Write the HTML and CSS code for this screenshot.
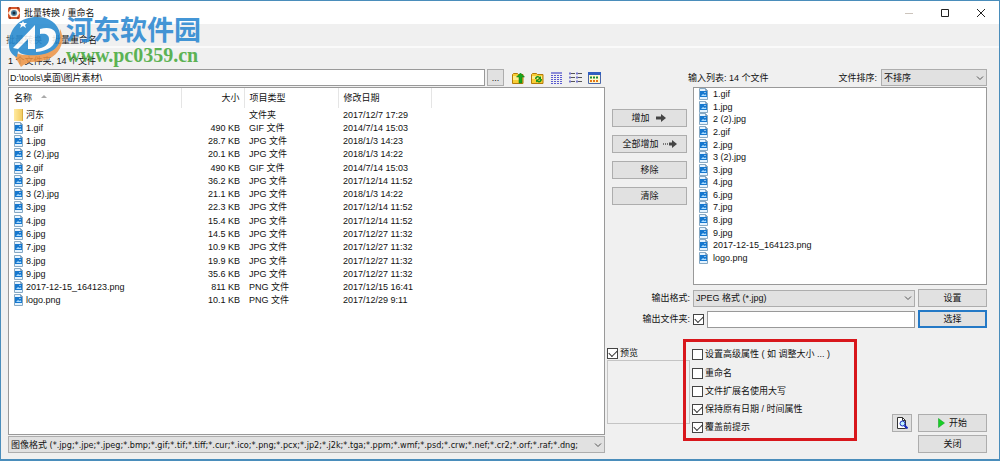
FILE: index.html
```
<!DOCTYPE html>
<html lang="zh-CN">
<head>
<meta charset="utf-8">
<title>批量转换 / 重命名</title>
<link rel="stylesheet" href="styles.css">
<script src="app.js" defer></script>
</head>
<body>
<svg class="sprite" aria-hidden="true">
  <symbol id="picture" viewBox="0 0 9 12">
    <path d="M.5.5h6l2 2v9h-8z" fill="#e4f3ff" stroke="#86a9c4"/>
    <path d="M6.5.5v2h2" fill="none" stroke="#86a3bc"/>
    <path d="M1 3h7v6H1z" fill="#1678cf"/>
    <path d="M2 8l2-2 1.500 1 1-.8 1 1.800z" fill="#a9dcff"/>
    <path d="M5.500 4h1v1h-1z" fill="#fff"/>
  </symbol>
  <symbol id="chevron" viewBox="0 0 8 6"><path d="M1 1.500l3 3 3-3" fill="none" stroke="#555"/></symbol>
</svg>
<div class="window">
  <header class="titlebar">
    <svg class="app-icon" viewBox="0 0 12 12">
      <rect width="12" height="12" rx="2" fill="#d8572a"/>
      <path d="M0 6l3-4h6l3 4-3 4H3z" fill="#fff0df"/>
      <circle cx="6" cy="6" r="3" fill="#4a7f9f"/><circle cx="6" cy="6" r="1.500" fill="#172936"/>
      <path d="M1 1h2M9 1h2M1 11h2M9 11h2" stroke="#6d2210"/>
    </svg>
    <h1 class="title">批量转换 / 重命名</h1>
    <div class="window-buttons">
      <button class="window-button" aria-label="最小化"><svg viewBox="0 0 10 10"><path d="M1 5.500h8" stroke="#ccc4bc"/></svg></button>
      <button class="window-button" aria-label="最大化"><svg viewBox="0 0 10 10"><path d="M1.500 1.500h7v7h-7z" fill="none" stroke="#222"/></svg></button>
      <button class="window-button" aria-label="关闭窗口"><svg viewBox="0 0 10 10"><path d="M1 1l8 8M9 1L1 9" stroke="#222"/></svg></button>
    </div>
  </header>
  <nav class="tabs">
    <button class="tab tab-active">批量转换</button>
    <button class="tab">批量重命名</button>
  </nav>
  <main class="page">
    <section class="browser">
      <p class="count">1 个文件夹, 14 个文件</p>
      <div class="path-row">
        <input class="field path" type="text" aria-label="路径" value="D:\tools\桌面\图片素材\">
        <button class="button browse">...</button>
        <div class="tools">
          <button class="tool" aria-label="上一级"><svg viewBox="0 0 13 12"><path d="M.5 2.500l1-1h4l1 1h4.500v9H.5z" fill="#f8ce36" stroke="#b47a08"/><path d="M1 4h8v4H1z" fill="#ffec8a"/><path d="M8.500 1l4 4h-2.500v6H7V5H4.500z" fill="#18a51c" stroke="#087a10" stroke-width=".5"/></svg></button>
          <button class="tool" aria-label="刷新"><svg viewBox="0 0 13 12"><path d="M.5 2.500l1-1h4l1 1h5.500v9H.5z" fill="#f8ce36" stroke="#b47a08"/><path d="M1 4h10v3H1z" fill="#ffec8a"/><path d="M4 7c0-3 3-4 5-2l1-1v3.500H6.500L8 6C6.500 5 5.500 6 5.500 7zM11 7c0 3-3 4.500-5 2.500l-1 1V7.500h3l-1 1c1.500 1 2.500 0 2.500-1.500z" fill="#16921a"/></svg></button>
          <button class="tool" aria-label="列表"><svg viewBox="0 0 13 12"><path d="M1 1h11" stroke="#8d8dd8" stroke-width="2"/><path d="M1 3.500h2m1 0h2m1 0h2m1 0h2M1 5.500h2m1 0h2m1 0h2m1 0h2M1 7.500h2m1 0h2m1 0h2m1 0h2M1 9.500h2m1 0h2m1 0h2m1 0h2M1 11.500h2m1 0h2m1 0h2m1 0h2" stroke="#5b5bd0"/></svg></button>
          <button class="tool" aria-label="小图标"><svg viewBox="0 0 13 12"><path d="M0 1.500h2m5 0h2M0 5.500h2m5 0h2M0 9.500h2m5 0h2" stroke="#7777cf" stroke-width="2"/><path d="M2 1.500h4m3 0h4M2 5.500h4m3 0h4M2 9.500h4m3 0h4" stroke="#555"/></svg></button>
          <button class="tool" aria-label="缩略图"><svg viewBox="0 0 13 12"><path d="M.5.5h12v11H.5z" fill="#fff8cf" stroke="#4966aa"/><path d="M0 1.500h13" stroke="#315fc0" stroke-width="3"/><path d="M2 5.500h2m1 0h2m1 0h2" stroke="#198d35" stroke-width="2"/><path d="M2 9h2m1 0h2m1 0h2" stroke="#e47816" stroke-width="2"/></svg></button>
        </div>
      </div>
      <div class="file-list">
        <table class="files">
          <colgroup><col class="col-name"><col class="col-size"><col class="col-type"><col class="col-date"></colgroup>
          <thead><tr><th>名称 <svg class="sort" viewBox="0 0 6 4"><path d="M0 4l3-3 3 3z" fill="#aaa"/></svg></th><th class="size">大小</th><th>项目类型</th><th>修改日期</th></tr></thead>
          <tbody id="files"></tbody>
        </table>
      </div>
      <div class="select-box filter">
        <select class="select" aria-label="图像格式"><option>图像格式 (*.jpg;*.jpe;*.jpeg;*.bmp;*.gif;*.tif;*.tiff;*.cur;*.ico;*.png;*.pcx;*.jp2;*.j2k;*.tga;*.ppm;*.wmf;*.psd;*.crw;*.nef;*.cr2;*.orf;*.raf;*.dng;</option></select>
        <svg class="chevron"><use href="#chevron"/></svg>
      </div>
    </section>

    <section class="convert">
      <div class="input-area">
        <div class="transfer">
          <button class="button">增加 <svg class="arrow" viewBox="0 0 12 8"><path d="M1 4h7" stroke="#444" stroke-width="3"/><path d="M6 0l5 4-5 4z" fill="#444"/></svg></button>
          <button class="button">全部增加 <svg class="arrow" viewBox="0 0 14 8"><path d="M0 4h1m1 0h1m1 0h1" stroke="#777" stroke-width="2"/><path d="M6 4h4" stroke="#444" stroke-width="3"/><path d="M9 0l5 4-5 4z" fill="#444"/></svg></button>
          <button class="button">移除</button>
          <button class="button">清除</button>
        </div>
        <div class="queue">
          <div class="queue-head">
            <span>输入列表: 14 个文件</span>
            <label for="sort">文件排序:</label>
            <div class="select-box sort-box"><select class="select" id="sort"><option>不排序</option></select><svg class="chevron"><use href="#chevron"/></svg></div>
          </div>
          <ul class="queue-list" id="queue"></ul>
        </div>
      </div>
      <div class="output">
        <label for="format">输出格式:</label>
        <div class="select-box format"><select class="select" id="format"><option>JPEG 格式 (*.jpg)</option></select><svg class="chevron"><use href="#chevron"/></svg></div>
        <button class="button">设置</button>
        <label for="use-folder">输出文件夹:</label>
        <input class="check" type="checkbox" id="use-folder" checked>
        <input class="field" type="text" aria-label="输出文件夹路径">
        <button class="button button-focus">选择</button>
      </div>
      <div class="bottom">
        <div class="preview">
          <label class="option"><input class="check" type="checkbox" checked>预览</label>
          <div class="preview-pane"></div>
        </div>
        <div class="options">
          <label class="option option-first"><input class="check" type="checkbox">设置高级属性 ( 如 调整大小 ... )</label>
          <label class="option"><input class="check" type="checkbox">重命名</label>
          <label class="option"><input class="check" type="checkbox">文件扩展名使用大写</label>
          <label class="option"><input class="check" type="checkbox" checked>保持原有日期 / 时间属性</label>
          <label class="option"><input class="check" type="checkbox" checked>覆盖前提示</label>
        </div>
        <div class="actions">
          <button class="button" aria-label="预览结果"><svg class="look" viewBox="0 0 12 12"><path d="M1.500.5h5l3 3v8h-8z" fill="#fff" stroke="#333"/><path d="M6.500.5v3h3" fill="none" stroke="#333"/><circle cx="6.500" cy="6.500" r="2.500" fill="#bdf1ff" stroke="#1729bd"/><path d="M8.500 8.500l3 3" stroke="#1729bd" stroke-width="2"/></svg></button>
          <button class="button"><svg class="play" viewBox="0 0 7 10"><path d="M.5.500l6 4.500-6 4.500z" fill="#17cf24" stroke="#0b9a1c" stroke-width=".5"/></svg> 开始</button>
          <button class="button close">关闭</button>
        </div>
      </div>
    </section>
  </main>
  <div class="watermark">
    <svg class="mark" viewBox="0 0 56 52">
      <path d="M52 14c6 12 0 27-15 31-9 3-17 0-24 7L3 35c8 6 17 6 27 3 14-4 22-12 22-24z" fill="#ee9444"/>
      <path d="M1 30C1 12 13 2 29 2c12 0 21 6 23 17 2 12-8 20-22 21-9 1-17 0-20-4 0 2-1 4-1 6-5-2-8-6-8-12z" fill="#2187cf"/>
      <path d="M5 33L27 10v24h-7V24L10 34z" fill="#fff"/>
      <path d="M32 14c12-3 17 2 16 9-1 8-8 13-20 14v-3c9-1 13-5 13-10 0-4-3-6-9-5z" fill="#fff"/>
      <path d="M15 6l1 2h3l-2 2 1 3-3-2-3 2 1-3-2-2h3z" fill="#fff"/>
    </svg>
    <div>
      <div class="brand">河东软件园</div>
      <div class="site">www.pc0359.cn</div>
    </div>
  </div>
</div>
</body>
</html>
```
FILE: app.js
```
const files = [
  ["1.gif", "490 KB", "2014/7/14 15:03"],
  ["1.jpg", "28.7 KB", "2018/1/3 14:23"],
  ["2 (2).jpg", "20.1 KB", "2018/1/3 14:22"],
  ["2.gif", "490 KB", "2014/7/14 15:03"],
  ["2.jpg", "36.2 KB", "2017/12/14 11:52"],
  ["3 (2).jpg", "21.1 KB", "2018/1/3 14:22"],
  ["3.jpg", "22.3 KB", "2017/12/14 11:52"],
  ["4.jpg", "15.4 KB", "2017/12/14 11:52"],
  ["6.jpg", "14.5 KB", "2017/12/27 11:32"],
  ["7.jpg", "10.9 KB", "2017/12/27 11:32"],
  ["8.jpg", "19.9 KB", "2017/12/27 11:32"],
  ["9.jpg", "35.6 KB", "2017/12/27 11:32"],
  ["2017-12-15_164123.png", "811 KB", "2017/12/15 16:41"],
  ["logo.png", "10.1 KB", "2017/12/29 9:11"]
];
const picture = '<svg class="picture"><use href="#picture"/></svg>';
const row = (icon, name, size, type, date) =>
  `<tr><td><span class="name">${icon}${name}</span></td><td class="size">${size}</td><td>${type}</td><td>${date}</td></tr>`;

document.getElementById("files").innerHTML =
  row('<span class="folder"></span>', "河东", "", "文件夹", "2017/12/7 17:29") +
  files.map(([name, size, date]) =>
    row(picture, name, size, name.split(".").pop().toUpperCase() + " 文件", date)).join("");

document.getElementById("queue").innerHTML =
  files.map(([name]) => `<li class="queue-item">${picture}${name}</li>`).join("");
```
FILE: styles.css
```
* { box-sizing: border-box; }
body { margin: 0; color: #111; font: 9px/12px "Liberation Sans", "Noto Sans CJK SC", sans-serif; }
button, input, select { color: inherit; font: inherit; margin: 0; }
button { white-space: nowrap; }
svg { display: block; flex: none; }
.sprite { display: none; }

.window { position: relative; display: flex; flex-direction: column; min-height: 100vh; background: #f0f0f0; border: 1px solid #4a8dbb; border-bottom-width: 2px; }
.titlebar { display: flex; align-items: center; gap: 4px; height: 23px; padding-left: 7px; background: #fff; }
.app-icon { width: 12px; height: 12px; }
.title { flex: 1; margin: 0; font-size: 9px; font-weight: 400; }
.window-buttons { display: flex; }
.window-button { display: grid; place-items: center; width: 36px; height: 22px; padding: 0; background: none; border: 0; }
.window-button svg { width: 10px; height: 10px; }

.tabs { display: flex; gap: 10px; height: 24px; padding: 8px 5px 0; border-bottom: 2px solid #fafafa; }
.tab { height: 16px; padding: 0; background: none; border: 0; }
.tab-active { color: #555; }

.page { flex: 1; display: grid; grid-template-columns: minmax(0, 1fr) 380px; gap: 2px; padding: 7px 12px 6px 7px; }
.button { display: flex; align-items: center; justify-content: center; gap: 4px; height: 18px; padding: 0; background: #e1e1e1; border: 1px solid #adadad; }
.button-focus { border: 2px solid #2479c6; }
.field { min-width: 0; height: 17px; padding: 0 1px; background: #fff; border: 1px solid #999; }
.select-box { display: grid; height: 17px; }
.select { grid-area: 1 / 1; width: 100%; min-width: 0; padding: 0 14px 0 2px; appearance: none; background: #e1e1e1; border: 1px solid #adadad; border-radius: 0; }
.chevron { grid-area: 1 / 1; place-self: center end; width: 8px; height: 6px; margin-right: 3px; pointer-events: none; }
.check { appearance: none; flex: none; width: 11px; height: 11px; background: #fff; border: 1px solid #444; }
.check:checked::before { content: ""; display: block; width: 7px; height: 4px; margin: 1px; border: solid #333; border-width: 0 0 1px 1px; transform: rotate(-45deg); }
.picture { width: 9px; height: 12px; }

.browser { display: flex; flex-direction: column; min-width: 0; }
.count { margin: 0; padding-bottom: 2px; }
.path-row { display: flex; }
.path { flex: 1; }
.browse { width: 17px; height: 17px; margin-left: 2px; }
.tools { display: flex; align-items: center; gap: 6px; margin-left: 8px; padding-right: 4px; }
.tool { padding: 0; background: none; border: 0; }
.tool svg { width: 13px; height: 12px; }
.file-list { flex: 1; margin-top: 1px; background: #fff; border: 1px solid #999; }
.files { width: 422px; height: 219px; table-layout: fixed; border-collapse: collapse; }
.files th { height: 20px; padding: 0 5px; font-weight: 400; text-align: left; border-right: 1px solid #e5e5e5; }
.files td { padding: 0 5px; line-height: 12px; }
.files .size { padding-right: 4px; text-align: right; }
.col-name { width: 172px; }
.col-size { width: 63px; }
.col-type { width: 94px; }
.col-date { width: 93px; }
.sort { display: inline-block; width: 6px; height: 4px; margin: 0 0 3px 6px; }
.name { display: flex; align-items: center; gap: 3px; }
.folder { width: 9px; height: 12px; background: linear-gradient(90deg, #ffeaa0, #f3cd63); border-right: 1px solid #d9ad42; }
.filter { margin-top: 1px; font-family: "DejaVu Sans Condensed", "Noto Sans CJK SC", sans-serif; }

.convert { display: flex; flex-direction: column; }
.input-area { display: grid; grid-template-columns: 75px 1fr; gap: 6px; padding: 14px 0 0 5px; }
.transfer { display: flex; flex-direction: column; gap: 8px; padding-top: 40px; }
.arrow { width: 14px; height: 8px; }
.queue-head { display: flex; align-items: center; gap: 4px; margin-left: -5px; }
.queue-head span { flex: 1; }
.sort-box { width: 106px; }
.queue-list { display: flex; flex-direction: column; height: 198px; margin: 1px 0 0; padding: 0 5px 20px; list-style: none; background: #fff; border: 1px solid #999; }
.queue-item { flex: 1; display: flex; align-items: center; gap: 5px; line-height: 12px; }

.output { display: grid; grid-template-columns: 83px 11px 1fr 69px; align-items: center; gap: 3px; margin: 4px 0 auto; text-align: right; }
.format { grid-column: 2 / 4; }

.bottom { display: grid; grid-template-columns: 83px 174px 1fr; align-items: end; }
.preview { align-self: start; padding-top: 8px; }
.preview-pane { height: 64px; margin-top: 1px; border: 1px solid #c4c4c4; }
.option { display: flex; align-items: center; gap: 2px; height: 12px; white-space: nowrap; }
.options { z-index: 1; display: grid; gap: 6px; margin: 0 7px 12px -7px; width: 174px; padding: 6px 6px 5px; border: 3px solid #d8171c; }
.option-first { margin-bottom: 1px; }
.actions { display: grid; grid-template-columns: 20px 69px; justify-content: end; gap: 3px 6px; }
.close { grid-column: 2; }
.look { width: 12px; height: 12px; }
.play { width: 7px; height: 10px; }

.watermark { position: absolute; left: 7px; top: 14px; display: flex; gap: 2px; opacity: .85; pointer-events: none; }
.mark { width: 56px; height: 52px; }
.brand { color: #2484d0; font: 700 27px/28px "Noto Sans CJK SC", sans-serif; }
.site { color: #43a838; font: 700 20px/24px "Liberation Serif", serif; }
```
